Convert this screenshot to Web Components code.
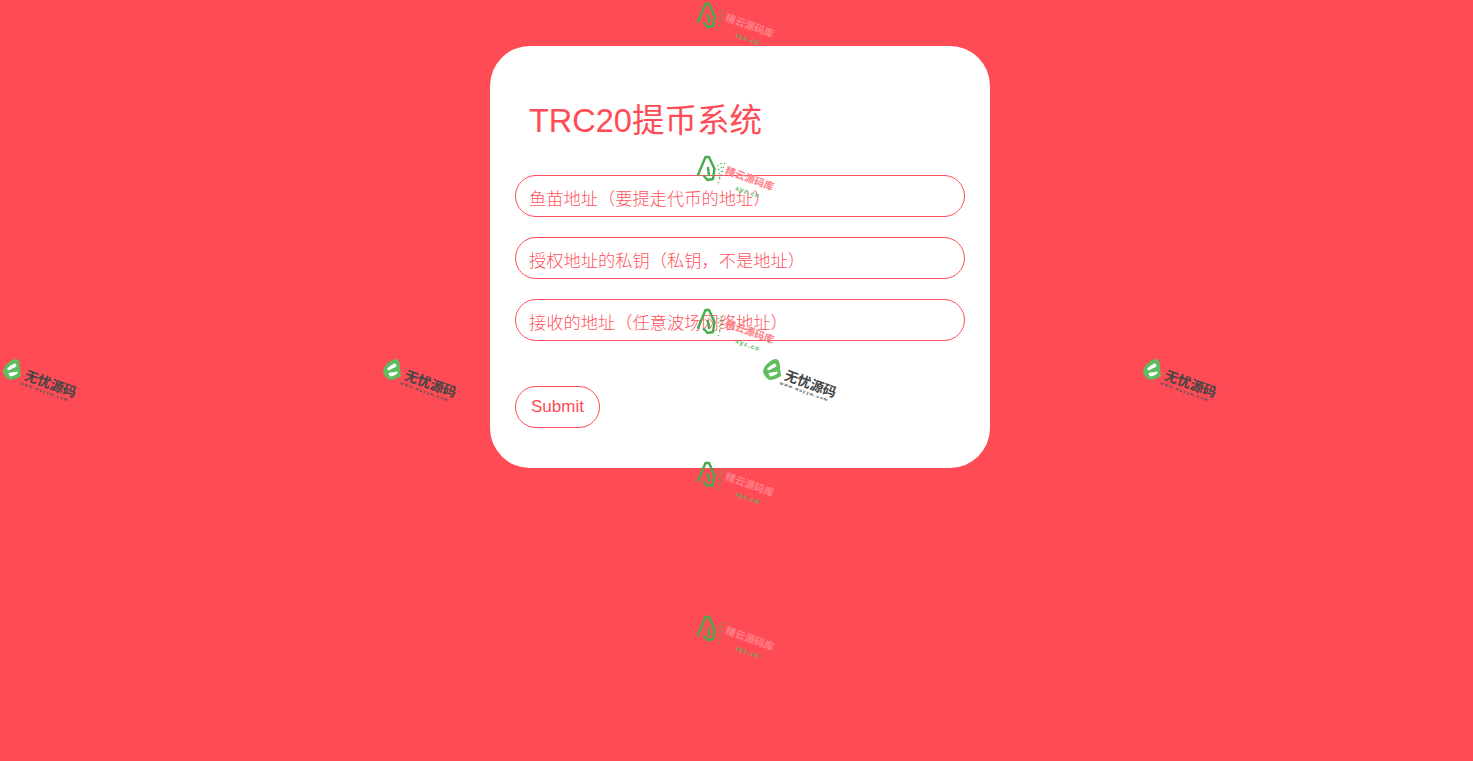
<!DOCTYPE html>
<html lang="zh">
<head>
<meta charset="utf-8">
<title>TRC20提币系统</title>
<style>
    html, body {
        margin: 0;
        height: 100%;
        background-color: #ff4b55;
        overflow: hidden;
    }
</style>
</head>
<body>
<withdraw-page>
    <withdraw-form heading="TRC20提币系统">
        <pill-input placeholder="鱼苗地址（要提走代币的地址）"></pill-input>
        <pill-input placeholder="授权地址的私钥（私钥，不是地址）"></pill-input>
        <pill-input placeholder="接收的地址（任意波场网络地址）"></pill-input>
        <pill-button slot="actions">Submit</pill-button>
    </withdraw-form>
    <logo-mark slot="marks" style="left:2px;top:358px"></logo-mark>
    <logo-mark slot="marks" style="left:382px;top:358px"></logo-mark>
    <logo-mark slot="marks" style="left:762px;top:358px"></logo-mark>
    <logo-mark slot="marks" style="left:1142px;top:358px"></logo-mark>
    <tree-mark slot="marks" style="left:696px;top:1px"></tree-mark>
    <tree-mark slot="marks" style="left:696px;top:154px"></tree-mark>
    <tree-mark slot="marks" style="left:696px;top:307px"></tree-mark>
    <tree-mark slot="marks" style="left:696px;top:460px"></tree-mark>
    <tree-mark slot="marks" style="left:696px;top:614px"></tree-mark>
</withdraw-page>

<script>
const FONT = '"Liberation Sans", "Noto Sans CJK SC", sans-serif';

// Page shell: centres the card, watermarks lie over everything
class WithdrawPage extends HTMLElement {
    constructor() {
        super();
        this.attachShadow({ mode: 'open' });
        this.shadowRoot.innerHTML = /*html*/`
            <style>
                :host {
                    display: block;
                    position: relative;
                    height: 761px;
                    box-sizing: border-box;
                    padding: 46px 0 0 7px;
                    font-family: ${FONT};
                }
                main {
                    display: flex;
                    justify-content: center;
                }
            </style>
            <main><slot></slot></main>
            <slot name="marks"></slot>
        `;
    }
}

// White card with the title and the fields
class WithdrawForm extends HTMLElement {
    constructor() {
        super();
        this.attachShadow({ mode: 'open' });
        this.shadowRoot.innerHTML = /*html*/`
            <style>
                :host {
                    display: block;
                    box-sizing: border-box;
                    width: 500px;
                    height: 422px;
                    padding: 0 25px;
                    background-color: #fff;
                    border-radius: 40px;
                }
                h1 {
                    margin: 0;
                    padding: 55px 0 0 14px;
                    height: 74px;
                    font-size: 32.5px;
                    font-weight: 400;
                    line-height: 40px;
                    color: #ff4b55;
                }
                .fields {
                    display: flex;
                    flex-direction: column;
                    gap: 20px;
                }
                .actions {
                    margin-top: 45px;
                }
            </style>
            <h1></h1>
            <div class="fields"><slot></slot></div>
            <div class="actions"><slot name="actions"></slot></div>
        `;
        this.shadowRoot.querySelector('h1').textContent = this.getAttribute('heading');
    }
}

class PillInput extends HTMLElement {
    constructor() {
        super();
        this.attachShadow({ mode: 'open' });
        this.shadowRoot.innerHTML = /*html*/`
            <style>
                :host {
                    display: block;
                }
                input {
                    display: block;
                    box-sizing: border-box;
                    width: 450px;
                    height: 42px;
                    padding: 6px 13px 0;
                    border: 1px solid #ff4b55;
                    border-radius: 21px;
                    outline: none;
                    background: transparent;
                    font: 300 17.25px ${FONT};
                    color: #ff4b55;
                }
                input::placeholder {
                    color: #ff535d;
                    opacity: 1;
                }
            </style>
            <input type="text">
        `;
        this.shadowRoot.querySelector('input').placeholder = this.getAttribute('placeholder');
    }
}

class PillButton extends HTMLElement {
    constructor() {
        super();
        this.attachShadow({ mode: 'open' });
        this.shadowRoot.innerHTML = /*html*/`
            <style>
                :host {
                    display: inline-block;
                }
                button {
                    display: block;
                    box-sizing: border-box;
                    width: 85px;
                    height: 42px;
                    padding: 0;
                    border: 1px solid #ff4b55;
                    border-radius: 21px;
                    background: #fff;
                    font: 17px ${FONT};
                    color: #ff4b55;
                    cursor: pointer;
                }
            </style>
            <button><slot></slot></button>
        `;
    }
}

// Dark watermark with the green badge
class LogoMark extends HTMLElement {
    constructor() {
        super();
        this.attachShadow({ mode: 'open' });
        this.shadowRoot.innerHTML = /*html*/`
            <style>
                :host {
                    position: absolute;
                    width: 80px;
                    height: 50px;
                    pointer-events: none;
                }
                svg {
                    position: absolute;
                    left: 0;
                    top: 0;
                }
                .words {
                    position: absolute;
                    left: 26px;
                    top: 9px;
                    transform: rotate(20deg);
                    transform-origin: 0 0;
                    white-space: nowrap;
                    color: #444;
                }
                .name {
                    font: 700 13.500px/15px "Noto Sans CJK SC", sans-serif;
                }
                .url {
                    font: 700 4.500px/6px "Liberation Sans", sans-serif;
                    letter-spacing: 1.100px;
                    margin-left: -2px;
                    color: #555;
                }
            </style>
            <svg width="24" height="24" viewBox="0 0 24 24" fill="none">
                <path d="M2 10 C4 6 9 2 13 1 C16 1 17 3 17.500 5 L19 18 C15 20.500 11 22 8 22 C4.500 21 1 16 1 13 Z" fill="#5ebd5e"/>
                <path d="M5 11 C7 8.500 10 6.500 12.500 5.500 C14 5.500 14.500 7 14.500 8.500 L7.500 12 C6.500 12.500 5.500 12 5 11 Z" fill="#fff"/>
                <path d="M6.500 15 L15.500 13.500 L15.500 15.500 C12.500 17.500 10 18.500 8.500 18.500 C7.500 18 6.800 16.500 6.500 15 Z" fill="#fff"/>
            </svg>
            <div class="words">
                <div class="name">无忧源码</div>
                <div class="url">www.wuyym.com</div>
            </div>
        `;
    }
}

// Green outline watermark with the pale name beside it
class TreeMark extends HTMLElement {
    constructor() {
        super();
        this.attachShadow({ mode: 'open' });
        this.shadowRoot.innerHTML = /*html*/`
            <style>
                :host {
                    position: absolute;
                    width: 82px;
                    height: 44px;
                    pointer-events: none;
                }
                svg {
                    position: absolute;
                    left: 0;
                    top: 0;
                }
                .name {
                    position: absolute;
                    left: 32px;
                    top: 10px;
                    transform: rotate(20deg);
                    transform-origin: 0 0;
                    white-space: nowrap;
                    font: 700 10.200px/11px "Noto Sans CJK SC", sans-serif;
                    color: #ff7f88;
                }
                .url {
                    position: absolute;
                    left: 41px;
                    top: 30px;
                    transform: rotate(20deg);
                    transform-origin: 0 0;
                    white-space: nowrap;
                    font: 700 6.500px/7px "Liberation Sans", sans-serif;
                    letter-spacing: 1px;
                    color: #4fb85a;
                }
            </style>
            <svg width="32" height="32" viewBox="0 0 32 32" fill="none">
                <path d="M2 21 L9.500 3 L13 3 L18.500 15 L17 25 L11.500 26 L8 22 M12 14 L13 21" stroke="#45ad4c" stroke-width="2.400" stroke-linejoin="round" stroke-linecap="round"/>
                <path d="M22 11 L24 26 M25 9 L26 20 M29 9 L22 30" stroke="#45ad4c" stroke-width="1.200" stroke-dasharray="1.200 2.800"/>
            </svg>
            <div class="name">精云源码库</div>
            <div class="url">xyz.cn</div>
        `;
    }
}

customElements.define('withdraw-page', WithdrawPage);
customElements.define('withdraw-form', WithdrawForm);
customElements.define('pill-input', PillInput);
customElements.define('pill-button', PillButton);
customElements.define('logo-mark', LogoMark);
customElements.define('tree-mark', TreeMark);
</script>
</body>
</html>
